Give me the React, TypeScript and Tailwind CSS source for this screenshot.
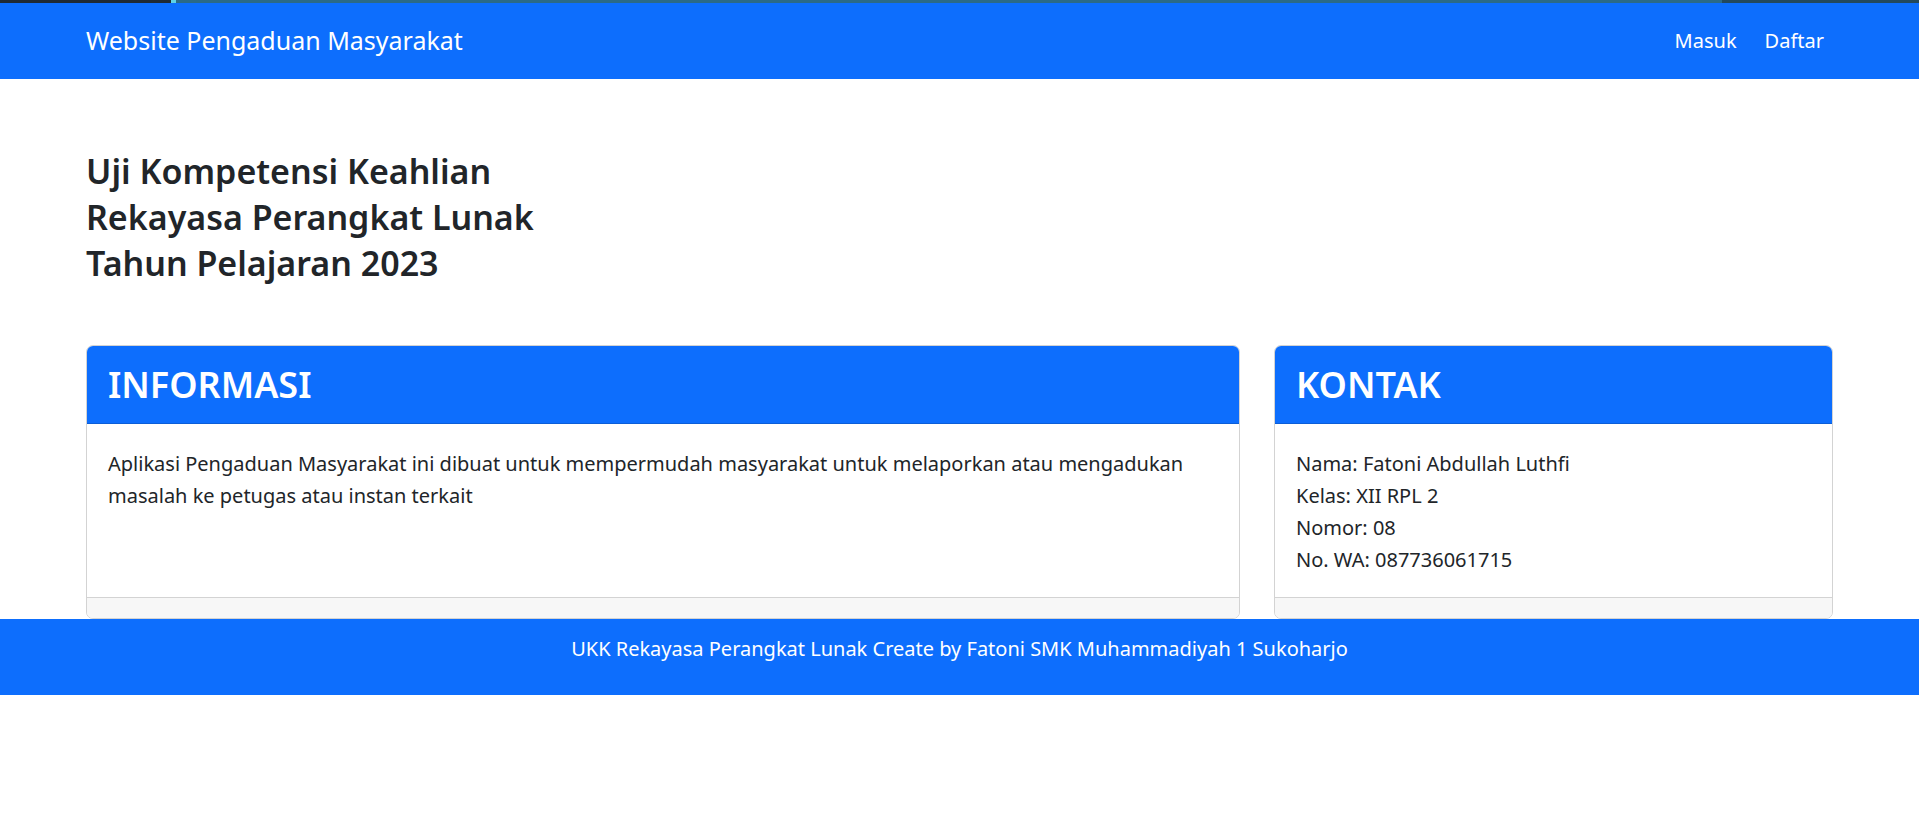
export default function App() {
  return (
    <div className="min-h-screen bg-white text-[#212529] font-['Segoe_UI','Noto_Sans',sans-serif]">
      {/* strip atas */}
      <div className="flex h-[3px]">
        <div className="w-[171px] bg-[#1f2a33]" />
        <div className="w-[5px] bg-[#5fd3e6]" />
        <div className="flex-1 bg-[#2b6a86]" />
        <div className="w-[197px] bg-[#23495c]" />
      </div>

      {/* Navbar */}
      <nav className="bg-[#0d6efd] h-[76px]">
        <div className="flex items-center justify-between h-full px-[86px]">
          <a href="#" className="text-white text-[25px]">
            Website Pengaduan Masyarakat
          </a>
          <div className="flex items-center gap-[28px] pr-[9px] text-[20px] text-white">
            <a href="#">Masuk</a>
            <a href="#">Daftar</a>
          </div>
        </div>
      </nav>

      <main className="px-[86px]">
        {/* Judul */}
        <h2 className="pt-[69px] text-[34px] leading-[46px] font-semibold">
          Uji Kompetensi Keahlian
          <br />
          Rekayasa Perangkat Lunak
          <br />
          Tahun Pelajaran 2023
        </h2>

        {/* Kartu */}
        <div className="flex gap-[34px] mt-[59px]">
          <div className="flex-1 flex flex-col border border-[#d3d3d3] rounded-[7px] overflow-hidden">
            <div className="bg-[#0d6efd] h-[78px] flex items-center px-[21px] border-b border-[#0b5ed7]">
              <h1 className="text-white text-[36px] font-semibold">INFORMASI</h1>
            </div>
            <div className="flex-1 pt-[24px] pb-[21px] px-[21px] text-[20px] leading-[32px]">
              <p>
                Aplikasi Pengaduan Masyarakat ini dibuat untuk mempermudah masyarakat untuk melaporkan atau mengadukan
                masalah ke petugas atau instan terkait
              </p>
            </div>
            <div className="h-[21px] bg-[#f7f7f7] border-t border-[#d3d3d3]" />
          </div>

          <div className="w-[559px] flex flex-col border border-[#d3d3d3] rounded-[7px] overflow-hidden">
            <div className="bg-[#0d6efd] h-[78px] flex items-center px-[21px] border-b border-[#0b5ed7]">
              <h1 className="text-white text-[36px] font-semibold">KONTAK</h1>
            </div>
            <div className="flex-1 pt-[24px] pb-[21px] px-[21px] text-[20px] leading-[32px]">
              <p>Nama: Fatoni Abdullah Luthfi</p>
              <p>Kelas: XII RPL 2</p>
              <p>Nomor: 08</p>
              <p>No. WA: 087736061715</p>
            </div>
            <div className="h-[21px] bg-[#f7f7f7] border-t border-[#d3d3d3]" />
          </div>
        </div>
      </main>

      {/* Footer */}
      <footer className="bg-[#0d6efd] h-[76px] pt-[15px] text-center text-white text-[20px] leading-[30px]">
        UKK Rekayasa Perangkat Lunak Create by Fatoni SMK Muhammadiyah 1 Sukoharjo
      </footer>
    </div>
  );
}
